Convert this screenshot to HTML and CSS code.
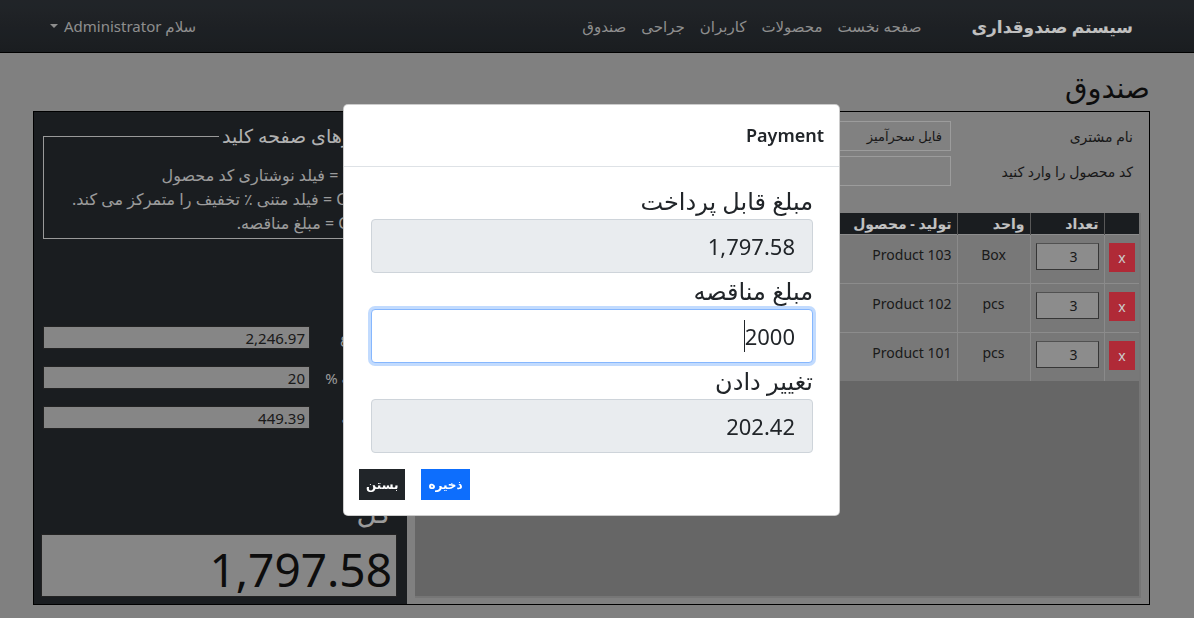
FILE: index.html
```html
<!DOCTYPE html>
<html lang="fa" dir="rtl">
<head>
    <meta charset="UTF-8">
    <meta name="viewport" content="width=device-width, initial-scale=1.0">
    <title>صندوق</title>
    <link rel="stylesheet" href="styles.css">
</head>
<body>

<nav class="navbar">
    <a class="brand" href="#">سیستم صندوقداری</a>
    <ul class="nav-links">
        <li><a href="#">صفحه نخست</a></li>
        <li><a href="#">محصولات</a></li>
        <li><a href="#">کاربران</a></li>
        <li><a href="#">جراحی</a></li>
        <li><a href="#">صندوق</a></li>
    </ul>
    <a class="user-menu" href="#">سلام Administrator <span class="caret"></span></a>
</nav>

<main class="page">
    <h1 class="page-title">صندوق</h1>

    <div class="pos">
        <section class="pos-main">
            <div class="form-row">
                <label for="customer">نام مشتری</label>
                <input type="text" id="customer" value="فایل سحرآمیز">
            </div>
            <div class="form-row">
                <label for="code">کد محصول را وارد کنید</label>
                <input type="text" id="code">
            </div>

            <div class="cart">
                <table class="cart-table">
                    <thead>
                        <tr>
                            <th class="col-del"></th>
                            <th class="col-qty">تعداد</th>
                            <th class="col-unit">واحد</th>
                            <th class="col-name">تولید - محصول</th>
                            <th>قیمت</th>
                            <th>جمع</th>
                        </tr>
                    </thead>
                    <tbody>
                        <tr>
                            <td><button class="del-btn">x</button></td>
                            <td><input class="qty" type="text" value="3"></td>
                            <td class="unit">Box</td>
                            <td>Product 103</td>
                            <td>285.00</td>
                            <td>855.00</td>
                        </tr>
                        <tr>
                            <td><button class="del-btn">x</button></td>
                            <td><input class="qty" type="text" value="3"></td>
                            <td class="unit">pcs</td>
                            <td>Product 102</td>
                            <td>248.99</td>
                            <td>746.97</td>
                        </tr>
                        <tr>
                            <td><button class="del-btn">x</button></td>
                            <td><input class="qty" type="text" value="3"></td>
                            <td class="unit">pcs</td>
                            <td>Product 101</td>
                            <td>215.00</td>
                            <td>645.00</td>
                        </tr>
                    </tbody>
                </table>
            </div>
        </section>

        <aside class="pos-side">
            <fieldset class="shortcuts">
                <legend>میانبرهای صفحه کلید</legend>
                <p>Ctrl + I = فیلد نوشتاری کد محصول</p>
                <p>Ctrl + D = فیلد متنی ٪ تخفیف را متمرکز می کند.</p>
                <p>Ctrl + P = مبلغ مناقصه.</p>
            </fieldset>

            <div class="totals">
                <div class="total-row">
                    <span class="total-label">مجموع</span>
                    <input type="text" value="2,246.97" readonly>
                </div>
                <div class="total-row">
                    <span class="total-label">تخفیف %</span>
                    <input type="text" value="20" readonly>
                </div>
                <div class="total-row">
                    <span class="total-label">تخفیف</span>
                    <input type="text" value="449.39" readonly>
                </div>
            </div>

            <div class="grand-total">
                <div class="grand-label">کل</div>
                <input type="text" value="1,797.58" readonly>
            </div>
        </aside>
    </div>
</main>

<div class="backdrop"></div>

<div class="modal-wrap">
    <div class="modal">
        <div class="modal-header">
            <h5>Payment</h5>
        </div>
        <div class="modal-body">
            <label>مبلغ قابل پرداخت</label>
            <input type="text" value="1,797.58" readonly>
            <label>مبلغ مناقصه</label>
            <div class="input-focus">
                <span class="caret-line"></span>2000
            </div>
            <label>تغییر دادن</label>
            <input type="text" value="202.42" readonly>
        </div>
        <div class="modal-footer">
            <button class="btn btn-primary">ذخیره</button>
            <button class="btn btn-dark">بستن</button>
        </div>
    </div>
</div>

</body>
</html>
```

FILE: styles.css
```css
/* General Styles */
* {
    box-sizing: border-box;
    margin: 0;
    padding: 0;
}

body {
    font-family: "Noto Sans", "DejaVu Sans", sans-serif;
    direction: rtl;
    background-color: #a0a0a0;
    color: #212529;
    font-size: 14px;
    height: 618px;
    overflow: hidden;
}

input,
button {
    font-family: inherit;
}

/* Navbar */
.navbar {
    display: flex;
    align-items: center;
    height: 53px;
    padding: 0 61px 0 50px;
    background: linear-gradient(#2a2e33, #212529);
    border-bottom: 1px solid #000;
}

.navbar a {
    text-decoration: none;
}

.navbar .brand {
    font-size: 17px;
    font-weight: bold;
    color: #f0f0f0;
    margin-left: 50px;
}

.nav-links {
    display: flex;
    list-style: none;
    gap: 15px;
}

.nav-links a,
.user-menu {
    color: #b2b2b2;
    font-size: 15px;
}

.user-menu {
    margin-right: auto;
    display: flex;
    align-items: center;
    gap: 6px;
}

.caret {
    border-top: 4px solid #b2b2b2;
    border-left: 4px solid transparent;
    border-right: 4px solid transparent;
}

/* Page */
.page {
    padding: 0 44px 0 33px;
}

.page-title {
    font-size: 29px;
    font-weight: normal;
    color: #111;
    line-height: 40px;
    padding: 14px 0 0 2px;
    margin-bottom: 4px;
}

.pos {
    display: flex;
    height: 494px;
    border: 1px solid #000;
}

/* Right side: customer form and cart */
.pos-main {
    flex: 1;
    display: flex;
    flex-direction: column;
    padding: 9px 8px 6px 8px;
}

.form-row {
    display: flex;
    align-items: center;
    margin-bottom: 5px;
    padding-right: 8px;
}

.form-row label {
    width: 182px;
    color: #1e1e1e;
}

.form-row input {
    width: 330px;
    height: 30px;
    background: #a2a2a2;
    border: 1px solid #c4c4c4;
    padding: 0 8px;
    font-size: 13px;
    color: #1e1e1e;
}

.cart {
    flex: 1;
    margin-top: 22px;
    background-color: #808080;
    border-right: 2px solid #949494;
    border-bottom: 2px solid #949494;
}

.cart-table {
    width: 100%;
    border-collapse: collapse;
}

.cart-table th {
    background-color: #212529;
    color: #f2f2f2;
    font-size: 14px;
    text-align: right;
    height: 21px;
    padding: 0 5px;
    border-left: 1px solid #6e6e6e;
}

.cart-table .col-del { width: 35px; }
.cart-table .col-qty { width: 72px; }
.cart-table .col-unit { width: 73px; }
.cart-table .col-name { width: 120px; }

.cart-table td {
    height: 49px;
    padding: 8px 5px;
    vertical-align: top;
    background-color: #979797;
    border-left: 1px solid #adadad;
    border-top: 1px solid #b0b0b0;
    color: #222;
    font-size: 14px;
    line-height: 24px;
}

.cart-table td:first-child {
    padding: 8px 4px;
}

.cart-table .unit {
    text-align: center;
}

.del-btn {
    width: 26px;
    height: 29px;
    background-color: #dc3545;
    color: #fff;
    border: none;
    font-size: 14px;
}

.qty {
    width: 63px;
    height: 27px;
    background-color: #b0b0b0;
    border: 1px solid #444;
    border-top-color: #666;
    text-align: right;
    padding-right: 20px;
    font-size: 14px;
    color: #222;
}

/* Left side: shortcuts and totals */
.pos-side {
    width: 373px;
    background-color: #212529;
    display: flex;
    flex-direction: column;
    padding: 12px 10px 7px 9px;
}

.shortcuts {
    border: 1px solid #c0c0c0;
    padding: 0 4px 3px 10px;
    color: #c2c2c2;
}

.shortcuts legend {
    font-size: 19px;
    color: #dedede;
    padding: 0 3px;
    margin-right: 4px;
    line-height: 24px;
}

.shortcuts p {
    font-size: 16px;
    line-height: 24px;
}

.shortcuts p:first-of-type {
    margin-top: 15px;
}

.totals {
    display: flex;
    flex-direction: column;
    gap: 17px;
    margin-top: 87px;
}

.total-row {
    display: flex;
    align-items: center;
}

.total-label {
    flex: 1;
    color: #c2c2c2;
    font-size: 15px;
    padding-right: 14px;
}

.total-row input {
    width: 267px;
    height: 23px;
    background-color: #a8a8a8;
    border: 1px solid #2c2c2c;
    text-align: right;
    padding: 0 4px;
    font-size: 15px;
    color: #222;
}

.grand-total {
    margin-top: auto;
}

.grand-label {
    font-size: 28px;
    color: #c2c2c2;
    padding-right: 6px;
    line-height: 36px;
    margin-bottom: 4px;
}

.grand-total input {
    width: 356px;
    height: 63px;
    background-color: #a8a8a8;
    border: 1px solid #2c2c2c;
    text-align: right;
    font-size: 46px;
    padding: 6px 4px 0;
    color: #111;
}

/* Modal */
.backdrop {
    position: fixed;
    inset: 0;
    background-color: rgba(0, 0, 0, 0.2);
}

.modal-wrap {
    position: fixed;
    inset: 0;
    display: flex;
    justify-content: center;
    align-items: flex-start;
    padding: 104px 11px 0 0;
    direction: ltr;
}

.modal {
    direction: rtl;
    width: 497px;
    background-color: #fff;
    border-radius: 5px;
    border: 1px solid rgba(0, 0, 0, 0.2);
}

.modal-header {
    padding: 15px 15px 16px;
    border-bottom: 1px solid #dee2e6;
}

.modal-header h5 {
    font-size: 18px;
    font-weight: 600;
    line-height: 30px;
    color: #212529;
}

.modal-body {
    padding: 16px 26px 0 27px;
}

.modal-body label {
    display: block;
    font-size: 24px;
    line-height: 36px;
    color: #212529;
}

.modal-body input,
.input-focus {
    display: block;
    width: 100%;
    height: 54px;
    font-size: 22px;
    text-align: right;
    padding: 0 17px;
    border: 1px solid #ced4da;
    border-radius: 4px;
    background-color: #e9ecef;
    color: #212529;
}

.input-focus {
    display: flex;
    align-items: center;
    direction: ltr;
    justify-content: flex-end;
    background-color: #fff;
    border-color: #86b7fe;
    box-shadow: 0 0 0 3px rgba(13, 110, 253, 0.25);
}

.caret-line {
    width: 1px;
    height: 32px;
    background-color: #212529;
}

.modal-footer {
    display: flex;
    justify-content: flex-end;
    gap: 16px;
    padding: 16px 15px 15px;
}

.btn {
    height: 31px;
    padding: 0 7px;
    border: none;
    color: #fff;
    font-size: 12px;
    font-weight: bold;
}

.btn-primary {
    background-color: #0d6efd;
}

.btn-dark {
    background-color: #212529;
}
```
